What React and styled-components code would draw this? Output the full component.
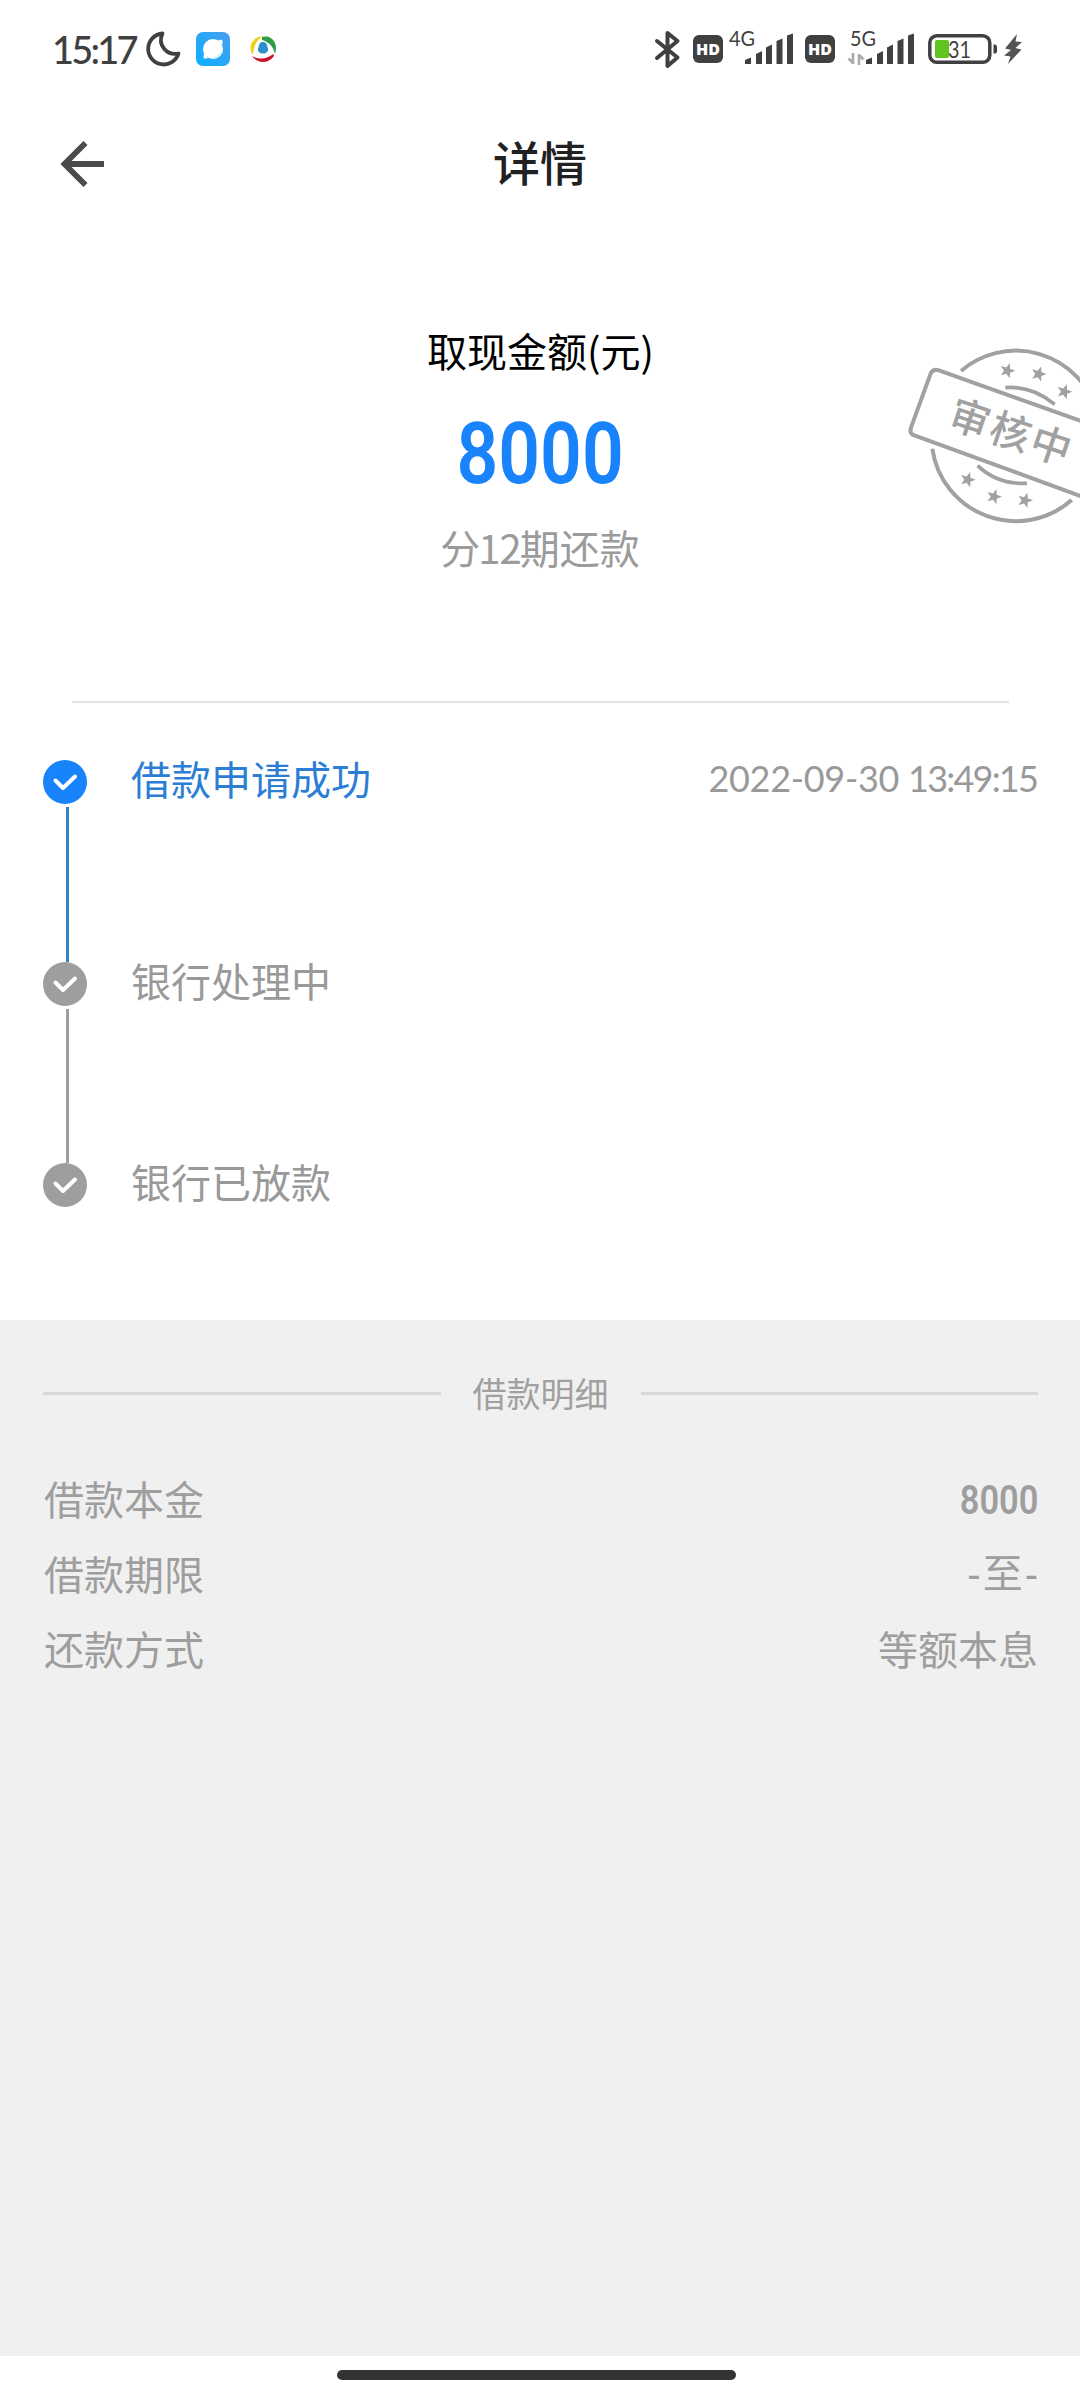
import React from 'react';
import styled, { createGlobalStyle } from 'styled-components';

const GlobalStyle = createGlobalStyle`
  * {
    box-sizing: border-box;
  }

  body {
    margin: 0;
    background: #fff;
    font-family: "Noto Sans CJK SC", sans-serif;
  }

  svg {
    display: block;
    flex-shrink: 0;
    overflow: visible;
  }
`;

const Page = styled.div`
  position: relative;
  width: 1080px;
  height: 2400px;
  display: flex;
  flex-direction: column;
  overflow: hidden;
  background: #fff;
`;

const StatusBar = styled.div`
  height: 100px;
  padding: 0 58px 2px 52px;
  display: flex;
  align-items: center;
  justify-content: space-between;
`;

const StatusGroup = styled.div`
  display: flex;
  align-items: center;
`;

const Clock = styled.span`
  width: 94px;
  font-family: Lato, sans-serif;
  font-size: 38px;
  font-weight: 500;
  line-height: 40px;
  letter-spacing: -2.8px;
  color: #404040;
  white-space: nowrap;
`;

const HdBadge = styled.div`
  width: 30px;
  height: 28px;
  margin-right: ${props => props.$gap}px;
  border-radius: 6px;
  background: #404040;
  color: #fff;
  font-family: "Open Sans", sans-serif;
  font-size: 16px;
  font-weight: 800;
  line-height: 28px;
  text-align: center;
`;

const NavBar = styled.div`
  height: 128px;
  padding: 0 60px;
  display: grid;
  grid-template-columns: 1fr auto 1fr;
  align-items: center;
`;

const NavTitle = styled.div`
  margin-bottom: 6px;
  font-size: 47px;
  font-weight: 500;
  line-height: 60px;
  color: #212121;
`;

const Summary = styled.div`
  height: 473px;
  padding-top: 92px;
  display: flex;
  flex-direction: column;
  align-items: center;
`;

const SummaryLabel = styled.div`
  padding-left: 1px;
  font-size: 40px;
  line-height: 60px;
  color: #000;
`;

const Amount = styled.div`
  margin-top: 34px;
  font-family: Roboto, sans-serif;
  font-size: 85px;
  font-weight: 600;
  line-height: 80px;
  color: #1883fb;
  transform: scaleX(0.86);
`;

const Term = styled.div`
  margin-top: 23px;
  font-size: 40px;
  line-height: 60px;
  color: #9b9b9b;
`;

const TermCount = styled.span`
  margin: 0 -1px 0 -2px;
  letter-spacing: -1px;
`;

const StampWrap = styled.div`
  position: absolute;
  top: 330px;
  right: 0;
`;

const Divider = styled.div`
  height: 2px;
  margin: 0 71px 0 72px;
  background: #e2e2e2;
`;

const Steps = styled.div`
  height: 617px;
  padding: 57px 43px 0;
`;

const Step = styled.div`
  height: 201.5px;
  display: flex;
  align-items: flex-start;
`;

const StepMarker = styled.div`
  width: 44px;
  height: 100%;
  display: flex;
  flex-direction: column;
`;

const StepLine = styled.div`
  width: 3px;
  flex: 1;
  margin: 3px 0 0 23px;
  background: ${props => (props.$active ? '#3a80c8' : '#9e9e9e')};
`;

const StepTitle = styled.div`
  flex: 1;
  margin-left: 44px;
  font-size: 40px;
  line-height: 36px;
  color: ${props => (props.$active ? '#2b7ed3' : '#999')};
`;

const StepDate = styled.div`
  font-family: Lato, sans-serif;
  font-size: 36px;
  line-height: 36px;
  letter-spacing: -0.3px;
  color: #999;
  white-space: pre;
`;

const StepTime = styled.span`
  letter-spacing: -1.8px;
`;

const Details = styled.div`
  height: 1036px;
  padding: 43px 42px 0 43px;
  background: #f0f0f0;
`;

const DetailsHeading = styled.div`
  height: 60px;
  display: flex;
  align-items: center;
  gap: 32px;
  margin-bottom: 37px;
  font-size: 34px;
  line-height: 60px;
  color: #a0a0a0;

  &:before,
  &:after {
    content: "";
    flex: 1;
    height: 3px;
    background: #d8d8d8;
  }
`;

const DetailRow = styled.div`
  height: 75px;
  padding-left: 1px;
  display: flex;
  align-items: center;
  justify-content: space-between;
  font-size: 40px;
  line-height: 60px;
  color: #9e9e9e;
`;

const DetailNumber = styled.span`
  padding-top: 6px;
  font-family: Roboto, sans-serif;
  font-size: 40px;
  font-weight: 600;
  transform: scaleX(0.86);
  transform-origin: right;
`;

const DetailRange = styled.span`
  padding-top: 3px;
  margin-right: -2px;
  font-family: "Liberation Sans", "Noto Sans CJK SC", sans-serif;
  letter-spacing: 2px;
`;

const HomeArea = styled.div`
  flex: 1;
  padding: 14px 0 0 337px;
`;

const HomeHandle = styled.div`
  width: 399px;
  height: 10px;
  border-radius: 5px;
  background: #333;
`;

const MoonIcon = () => (
  <svg width="36" height="38" viewBox="0 0 36 38">
    <path
      d="M16.500 3.500 A15.500 15.500 0 1 0 32.500 23.500 C21 26 11 15 16.500 3.500Z"
      fill="none"
      stroke="#404040"
      strokeWidth="3.800"
      strokeLinejoin="round"
    />
  </svg>
);

const BrowserIcon = () => (
  <svg width="34" height="34" viewBox="0 0 34 34" style={{ marginLeft: 14 }}>
    <defs>
      <linearGradient id="browser" x1="1" y1="0" x2="0" y2="1">
        <stop offset="0" stopColor="#4a9df0" />
        <stop offset="1" stopColor="#0cb0ff" />
      </linearGradient>
    </defs>
    <rect width="34" height="34" rx="7" fill="url(#browser)" />
    <path d="M8 21 L7.500 25.500 Q8 27.500 12 26Z M22 8.500 Q25.500 7 26.500 8.500 Q27 10 26 13Z" fill="#fff" />
    <circle cx="17" cy="17" r="10" fill="#fff" />
    <path d="M27 17 A10 10 0 0 1 14 26.500 C20 25 25 21 27 17Z" fill="#dcecf8" />
  </svg>
);

const SwirlIcon = () => (
  <svg width="28" height="28" viewBox="0 0 28 28" style={{ marginLeft: 19 }}>
    <path d="M4 20 C-2 12 3 2 14 1 C8 5 5 10 4 20Z" fill="#edd21c" />
    <path d="M13 2 C22 -1 30 8 26 19 C24 11 20 7 13 5Z" fill="#2b9f48" />
    <path d="M3 21 C11 25 18 24 24 19 L25 21 C19 29 9 29 3 21Z" fill="#c91227" />
    <path d="M14 7 C17 7 18 9 18 11 C19 13 20 15 18 17 C16 19 12 19 10 17 C8 15 9 13 10 11 C10 9 11 7 14 7Z" fill="#2a8fcc" />
  </svg>
);

const BluetoothIcon = () => (
  <svg width="26" height="40" viewBox="0 0 26 40" style={{ marginRight: 13 }}>
    <path d="M3 12 L23.500 28.500 L13.500 37 V4 L23.500 12 L3 29" fill="none" stroke="#404040" strokeWidth="4" strokeLinejoin="round" strokeLinecap="round" />
  </svg>
);

// cellular signal: network label above the five bars
const Signal = ({ label, data, gap }) => (
  <svg width="66" height="40" viewBox="0 0 66 40" style={{ marginRight: gap }}>
    <text x="2" y="16.500" fontFamily="Lato, sans-serif" fontSize="20.500" fill="#404040" textLength="26" lengthAdjust="spacingAndGlyphs">{label}</text>
    {data && (
      <path d="M5 24 V35 M5 34 L0.500 29.500 M11 36 V25 M11 26 L15.500 30.500" fill="none" stroke="#aaa" strokeWidth="2.600" />
    )}
    <g fill="#404040">
      <path d="M18 31 L24 28.500 V35 H18Z" />
      <path d="M29 25 L35 22 V35 H29Z" />
      <path d="M39 18.500 L45 15.500 V35 H39Z" />
      <path d="M49.500 12 L55.500 9.500 V35 H49.500Z" />
      <path d="M60 6.500 L66 4.500 V35 H60Z" />
    </g>
  </svg>
);

const BatteryIcon = () => (
  <svg width="70" height="32" viewBox="0 0 70 32">
    <rect x="1.800" y="2.800" width="60" height="26.500" rx="7" fill="none" stroke="#404040" strokeWidth="3.500" />
    <rect x="7" y="7" width="14" height="18" rx="2" fill="#5fc51e" />
    <path d="M65.500 11.500 H67 Q69 11.500 69 14 V18 Q69 20.500 67 20.500 H65.500Z" fill="#404040" />
    <text x="20" y="24.500" fontFamily="Lato, sans-serif" fontSize="23.500" fill="#404040" textLength="23" lengthAdjust="spacingAndGlyphs">31</text>
  </svg>
);

const BoltIcon = () => (
  <svg width="18" height="30" viewBox="0 0 18 30" style={{ marginLeft: 6 }}>
    <path d="M13 0 L1 14.500 L7 16 L0 21.500 L6.500 22.500 L4 30 L17.500 15.500 L11.500 14 L18 8 L11.500 7.500Z" fill="#555" />
  </svg>
);

const BackIcon = () => (
  <svg width="46" height="48" viewBox="0 0 46 48">
    <path d="M25.500 3 L4.500 24 L25.500 45 M5 24 H44" fill="none" stroke="#4a4a4a" strokeWidth="5.800" />
  </svg>
);

const CheckIcon = ({ active }) => (
  <svg width="44" height="44" viewBox="0 0 44 44">
    <circle cx="22" cy="22" r="22" fill={active ? '#1883fb' : '#9e9e9e'} />
    <path d="M12.500 20.500 L20 28 L32 16.500" fill="none" stroke="#fff" strokeWidth="4" strokeLinecap="round" strokeLinejoin="round" />
  </svg>
);

const starPoints = (cx, cy, r, turn) =>
  Array.from({ length: 10 }, (_, i) => {
    const radius = i % 2 ? r * 0.42 : r;
    const angle = ((i * 36 - 90 + turn) * Math.PI) / 180;
    return `${cx + radius * Math.cos(angle)},${cy + radius * Math.sin(angle)}`;
  }).join(' ');

const stars = [
  [352, 122],
  [446, 132],
  [523, 185],
  [233, 449],
  [312, 500],
  [405, 511],
];

const Stamp = () => (
  <svg width="190" height="210" viewBox="0 0 570 630">
    <g fill="none" stroke="#a1a1a1" strokeWidth="12">
      <path d="M213 123 A253 253 0 0 1 620 242" />
      <path d="M127 356 A253 253 0 0 0 545 510" />
      <path d="M640 297 L147 121 Q128 115 121 133 L63 293 Q57 311 75 317 L640 523" />
      <path d="M346 173 Q425 166 494 223" strokeWidth="11" />
      <path d="M263 407 Q322 464 411 460" strokeWidth="11" />
    </g>
    <g fill="#a1a1a1">
      {stars.map(([x, y]) => (
        <polygon key={x} points={starPoints(x, y, 24, 18)} />
      ))}
      <text
        transform="translate(365 307) rotate(18.500)"
        y="44"
        textAnchor="middle"
        fontFamily="Noto Sans CJK SC, sans-serif"
        fontSize="121"
        fontWeight="500"
        letterSpacing="7"
      >
        审核中
      </text>
    </g>
  </svg>
);

const steps = [
  { title: '借款申请成功', date: '2022-09-30', time: '13:49:15', active: true },
  { title: '银行处理中' },
  { title: '银行已放款' },
];

function App() {
  return (
    <Page>
      <GlobalStyle />
      <StatusBar>
        <StatusGroup>
          <Clock>15:17</Clock>
          <MoonIcon />
          <BrowserIcon />
          <SwirlIcon />
        </StatusGroup>
        <StatusGroup>
          <BluetoothIcon />
          <HdBadge $gap={4}>HD</HdBadge>
          <Signal label="4G" gap={12} />
          <HdBadge $gap={13}>HD</HdBadge>
          <Signal label="5G" data gap={14} />
          <BatteryIcon />
          <BoltIcon />
        </StatusGroup>
      </StatusBar>

      <NavBar>
        <BackIcon />
        <NavTitle>详情</NavTitle>
      </NavBar>

      <Summary>
        <SummaryLabel>取现金额(元)</SummaryLabel>
        <Amount>8000</Amount>
        <Term>
          分<TermCount>12</TermCount>期还款
        </Term>
      </Summary>
      <StampWrap>
        <Stamp />
      </StampWrap>

      <Divider />

      <Steps>
        {steps.map((step, i) => (
          <Step key={step.title}>
            <StepMarker>
              <CheckIcon active={step.active} />
              {i < steps.length - 1 && <StepLine $active={step.active} />}
            </StepMarker>
            <StepTitle $active={step.active}>{step.title}</StepTitle>
            {step.date && (
              <StepDate>
                {step.date} <StepTime>{step.time}</StepTime>
              </StepDate>
            )}
          </Step>
        ))}
      </Steps>

      <Details>
        <DetailsHeading>借款明细</DetailsHeading>
        <DetailRow>
          <span>借款本金</span>
          <DetailNumber>8000</DetailNumber>
        </DetailRow>
        <DetailRow>
          <span>借款期限</span>
          <DetailRange>-至-</DetailRange>
        </DetailRow>
        <DetailRow>
          <span>还款方式</span>
          <span>等额本息</span>
        </DetailRow>
      </Details>

      <HomeArea>
        <HomeHandle />
      </HomeArea>
    </Page>
  );
}

export default App;
